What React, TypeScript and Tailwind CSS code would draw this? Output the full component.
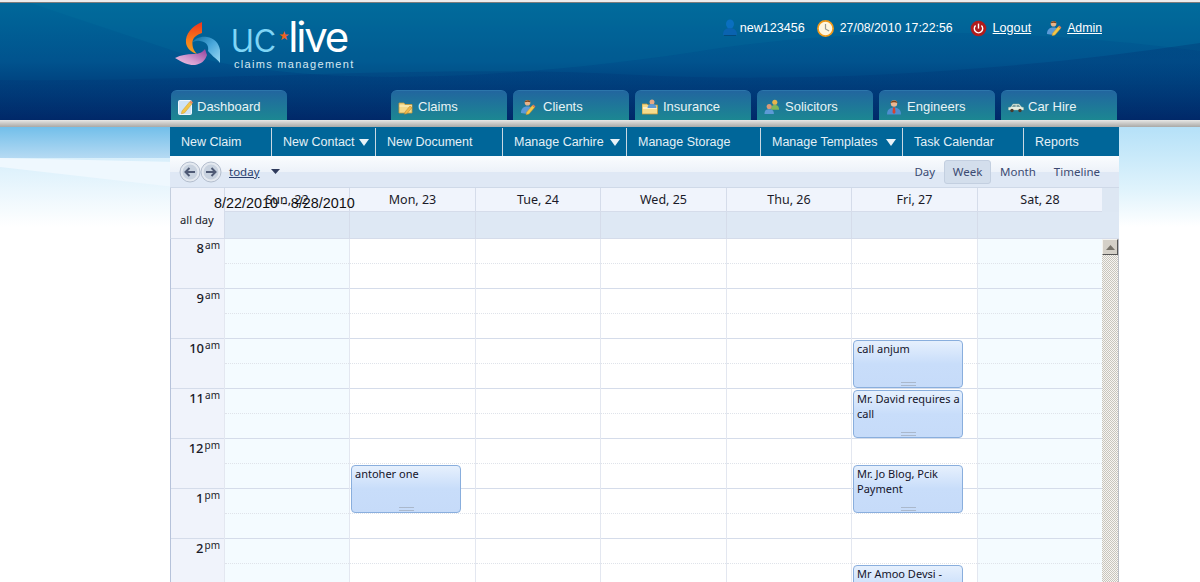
import React from "react";

const cal = "font-['Noto_Sans',sans-serif]";

function IconUser() {
  return (
    <svg width="16" height="18" viewBox="0 0 16 18">
      <ellipse cx="8" cy="5" rx="4" ry="4.6" fill="#0a6fc0" />
      <path d="M1 16c0-5 3-7 7-7s7 2 7 7z" fill="#0a63b0" />
      <rect x="2" y="16" width="12" height="1" fill="#034a7c" />
    </svg>
  );
}
function IconClock() {
  return (
    <svg width="17" height="17" viewBox="0 0 17 17">
      <circle cx="8.5" cy="8.5" r="7.6" fill="#fff6df" stroke="#f09a1a" strokeWidth="1.7" />
      <path d="M8.5 4v5l3.6 2" fill="none" stroke="#9a9a92" strokeWidth="1.2" />
    </svg>
  );
}
function IconPower() {
  return (
    <svg width="17" height="17" viewBox="0 0 17 17">
      <circle cx="8.5" cy="8.5" r="7.8" fill="#b01c1c" />
      <path d="M5.6 5.6a4.2 4.2 0 1 0 5.8 0" fill="none" stroke="#fff" strokeWidth="1.4" />
      <path d="M8.5 3.6v5" stroke="#fff" strokeWidth="1.4" />
    </svg>
  );
}
function IconPersonPencil() {
  return (
    <svg width="16" height="16" viewBox="0 0 17 17">
      <circle cx="8" cy="4" r="3" fill="#e9b48c" />
      <path d="M5 3.4c0-2.600 6-3 6 0-2-.8-4-.8-6 0z" fill="#7c4318" />
      <path d="M1 15c0-5 3-7 7-7s5 1 5 3l-5 5z" fill="#5b9ad8" />
      <path d="M7 14l6-7 2.500 2-6 7-3 .8z" fill="#f3c648" stroke="#c98f22" strokeWidth=".5" />
      <path d="M13 7l1-1.200 2.400 2-1 1.200z" fill="#e2795a" />
    </svg>
  );
}
function IconNote() {
  return (
    <svg width="16" height="16" viewBox="0 0 16 16">
      <rect x=".5" y="1.500" width="13" height="14" rx="1" fill="#cfe4f7" stroke="#eef6fd" />
      <path d="M4 12l7.500-9 2.400 2-7.500 9-3 .8z" fill="#f3c648" stroke="#cf9a2c" strokeWidth=".5" />
      <path d="M11.500 3l1.200-1.400 2.400 2L13.900 5z" fill="#e9885e" />
    </svg>
  );
}
function IconFolderPencil() {
  return (
    <svg width="16" height="16" viewBox="0 0 16 16">
      <path d="M1 4h5l1 1.500h7V14H1z" fill="#f4d98a" stroke="#c79a3a" strokeWidth=".8" />
      <path d="M1.500 7h12.500" stroke="#fff3c8" />
      <path d="M7 13l5-6 2 1.600-5 6-2.500.6z" fill="#f0b84a" stroke="#b9802a" strokeWidth=".5" />
    </svg>
  );
}
function IconFolderPerson() {
  return (
    <svg width="16" height="16" viewBox="0 0 16 16">
      <path d="M0 5h5l1 1h9.500v9H0z" fill="#f6dc8c" stroke="#c79a3a" strokeWidth=".8" />
      <path d="M1 9h14" stroke="#fff6d8" strokeWidth="1.500" />
      <circle cx="10" cy="3" r="2.500" fill="#e5a884" />
      <path d="M5.500 9c0-3 2-4 4.500-4s4.500 1 4.500 4z" fill="#5d9ad6" />
    </svg>
  );
}
function IconPeople() {
  return (
    <svg width="17" height="16" viewBox="0 0 17 16">
      <circle cx="11.500" cy="3" r="2.700" fill="#e8b44c" />
      <path d="M7.500 11c0-4 1.500-5 4-5s4.500 1 4.500 5z" fill="#7fb65a" />
      <circle cx="5.500" cy="7.500" r="2.700" fill="#d89a78" />
      <path d="M.5 15.500c0-4 2-5 5-5s5 1 5 5z" fill="#5d9ad6" />
    </svg>
  );
}
function IconEngineer() {
  return (
    <svg width="16" height="16" viewBox="0 0 16 16">
      <circle cx="8" cy="4.500" r="3.200" fill="#eab894" />
      <path d="M4.500 4c0-3.500 7-3.500 7 0-2-1-5-1-7 0z" fill="#7c4318" />
      <path d="M1 15.500c0-5 3-7 7-7s7 2 7 7z" fill="#4f8ed0" />
      <path d="M7 8.500h2l.5 5-1.500 1.500-1.500-1.500z" fill="#d8402c" />
    </svg>
  );
}
function IconCar() {
  return (
    <svg width="16" height="16" viewBox="0 0 16 16">
      <path d="M.5 11V8.500L3 8l2-3h6l2.500 3 2 .6V11z" fill="#e6efe2" stroke="#aebfa8" strokeWidth=".4" />
      <path d="M5.500 5.800h2.200V8H3.900zM8.500 5.800h2.200L12.300 8H8.500z" fill="#7da0a0" />
      <circle cx="4" cy="11.500" r="1.700" fill="#4a3a2a" />
      <circle cx="12" cy="11.500" r="1.700" fill="#4a3a2a" />
    </svg>
  );
}

function Logo() {
  return (
    <svg width="46" height="44" viewBox="175 22 46 44" className="shrink-0">
      <defs>
        <linearGradient id="lgO" x1="0" y1="0" x2="0" y2="1">
          <stop offset="0" stopColor="#f0331c" />
          <stop offset=".6" stopColor="#f7801a" />
          <stop offset="1" stopColor="#f0a020" />
        </linearGradient>
        <linearGradient id="lgB" x1="0" y1="0" x2="1" y2="1">
          <stop offset="0" stopColor="#0d6ea0" />
          <stop offset=".5" stopColor="#4aa8dc" />
          <stop offset="1" stopColor="#9ad8f2" />
        </linearGradient>
        <linearGradient id="lgP" x1="1" y1="0" x2="0" y2="1">
          <stop offset="0" stopColor="#8f3f9a" />
          <stop offset=".6" stopColor="#d59cd0" />
          <stop offset="1" stopColor="#f0c8e2" />
        </linearGradient>
      </defs>
      <path d="M202 22C192 26 185 34 186 43c.6 5 5 9 11 11-3-3-5-7-4.500-12 .6-5 4-7 9.500-9z" fill="url(#lgO)" />
      <path d="M192 43c3-5 9-7 15-6 7 1 12 6 13 13v13c-3-4-7-6-12-12 1-5-1-9-8-10-3-.5-6 0-8 2z" fill="url(#lgB)" />
      <path d="M175 58c6-3 12-4 18-4 6 0 10-2 12-5l2 6c-2 6-6 9-12 10-6 .5-12-2-20-7z" fill="url(#lgP)" />
    </svg>
  );
}

const tabs = [
  { label: "Claims", icon: <IconFolderPencil />, gap: "gap-[4px]" },
  { label: "Clients", icon: <IconPersonPencil />, gap: "gap-[7px]" },
  { label: "Insurance", icon: <IconFolderPerson />, gap: "gap-[5px]" },
  { label: "Solicitors", icon: <IconPeople />, gap: "gap-[5px]" },
  { label: "Engineers", icon: <IconEngineer />, gap: "gap-[5px]" },
  { label: "Car Hire", icon: <IconCar />, gap: "gap-[4px]" },
];

function Tab({ label, icon, gap }: { label: string; icon: React.ReactNode; gap: string }) {
  return (
    <div className={`flex h-[30px] w-[116px] items-center rounded-t-[6px] border-t border-t-[#2c76ab] bg-gradient-to-b from-[#22669f] to-[#1c8792] pl-[7px] pt-[2px] text-[13px] text-[#e8f3f6] ${gap}`}>
      <span className="flex w-[16px] shrink-0 justify-center">{icon}</span>
      <span>{label}</span>
    </div>
  );
}

const navItems = [
  { label: "New Claim", w: "w-[102px]" },
  { label: "New Contact", w: "w-[104px]", caret: true },
  { label: "New Document", w: "w-[127px]" },
  { label: "Manage Carhire", w: "w-[124px]", caret: true },
  { label: "Manage Storage", w: "w-[134px]" },
  { label: "Manage Templates", w: "w-[142px]", caret: true },
  { label: "Task Calendar", w: "w-[121px]" },
  { label: "Reports", w: "w-[95px]", last: true },
];

const dayCols = [
  { label: "Sun, 22", w: "w-[125px]", weekend: true },
  { label: "Mon, 23", w: "w-[126px]" },
  { label: "Tue, 24", w: "w-[125px]" },
  { label: "Wed, 25", w: "w-[126px]" },
  { label: "Thu, 26", w: "w-[125px]" },
  { label: "Fri, 27", w: "w-[126px]" },
  { label: "Sat, 28", w: "w-[125px]", weekend: true },
];

const hours = [
  ["8", "am"],
  ["9", "am"],
  ["10", "am"],
  ["11", "am"],
  ["12", "pm"],
  ["1", "pm"],
  ["2", "pm"],
];

const events: Record<string, { top: string; text: string }[]> = {
  "Mon, 23": [{ top: "top-[226px]", text: "antoher one" }],
  "Fri, 27": [
    { top: "top-[101px]", text: "call anjum" },
    { top: "top-[151px]", text: "Mr. David requires a call" },
    { top: "top-[226px]", text: "Mr. Jo Blog, Pcik Payment" },
    { top: "top-[326px]", text: "Mr Amoo Devsi - " },
  ],
};

function HourSlots() {
  return (
    <>
      {hours.map((h) => (
        <div key={h[0]} className="h-[50px] border-b border-b-[#d5dcea]">
          <div className="h-[25px] border-b border-dotted border-b-[#dfe3ea]" />
        </div>
      ))}
    </>
  );
}

export default function App() {
  return (
    <div className="relative h-[582px] w-full overflow-hidden bg-white font-['Liberation_Sans',Arial,sans-serif]">
      {/* top strip */}
      <div className="h-[3px] border-b border-b-[#7c7c7c] bg-[#ececec]" />

      {/* header */}
      <header className="relative h-[117px] bg-gradient-to-b from-[#00689a] via-[#01538e] to-[#012868]">
        <svg className="absolute inset-0 h-full w-full" viewBox="0 0 1200 117" preserveAspectRatio="none">
          <defs>
            <linearGradient id="hdrLow" x1="0" y1="0" x2="0" y2="1">
              <stop offset="0" stopColor="#012a6c" stopOpacity=".3" />
              <stop offset="1" stopColor="#012a6c" stopOpacity=".05" />
            </linearGradient>
          </defs>
          <path d="M30 0L180 50C300 85 500 80 720 45 900 20 1060 30 1200 48V0z" fill="#0a86aa" opacity=".14" />
          <path d="M0 77C200 80 420 60 640 72 800 80 1000 70 1200 40V117H0z" fill="url(#hdrLow)" />
        </svg>
        <div className="relative flex h-full flex-col pl-[171px] pr-[83px]">
          <div className="flex h-[87px] items-start justify-between">
            <div className="flex items-start pl-[4px] pt-[19px]">
              <Logo />
              <div className="ml-[11px] flex flex-col">
                <div className="ml-[-2px] mt-[-8px] flex h-[44px] items-center font-['Inter',sans-serif] text-[42px] font-light tracking-[-1.5px]">
                  <span className="text-[#7fd5f6]">uc</span>
                  <span className="ml-[3px] text-[11px] text-[#f0621e]">★</span>
                  <span className="font-normal tracking-[-2.2px] text-white">live</span>
                </div>
                <div className="ml-[2px] text-[11px] leading-[13px] tracking-[1.3px] text-[#d4e8f2]">
                  claims management
                </div>
              </div>
            </div>
            <div className="flex items-center pr-[15px] pt-[16px] text-[12.3px] leading-[18px] text-white">
              <IconUser />
              <span className="ml-[2px] text-[12.6px]">new123456</span>
              <span className="ml-[12px]"><IconClock /></span>
              <span className="ml-[6px]">27/08/2010 17:22:56</span>
              <span className="ml-[17px]"><IconPower /></span>
              <span className="ml-[6px] text-[12.6px] underline">Logout</span>
              <span className="ml-[15px]"><IconPersonPencil /></span>
              <span className="ml-[5px] underline">Admin</span>
            </div>
          </div>
          <div className="flex gap-[6px]">
            <div className="mr-[98px]">
              <Tab label="Dashboard" icon={<IconNote />} gap="gap-[3px]" />
            </div>
            {tabs.map((t) => (
              <Tab key={t.label} label={t.label} icon={t.icon} gap={t.gap} />
            ))}
          </div>
        </div>
      </header>

      {/* grey bar */}
      <div className="h-[7px] bg-gradient-to-b from-[#e8e8e6] to-[#a9a9a7]" />

      {/* page */}
      <div className="relative h-[455px]">
        <svg className="absolute left-0 top-0 h-[100px] w-full" viewBox="0 0 1200 100" preserveAspectRatio="none">
          <defs>
            <linearGradient id="skyTop" x1="0" y1="0" x2="0" y2="1">
              <stop offset="0" stopColor="#72bfea" />
              <stop offset="1" stopColor="#b8dbf3" />
            </linearGradient>
            <linearGradient id="skyLow" x1="0" y1="0" x2="0" y2="1">
              <stop offset="0" stopColor="#d8effb" />
              <stop offset="1" stopColor="#ffffff" />
            </linearGradient>
            <linearGradient id="skyRight" x1="0" y1="0" x2="0" y2="1">
              <stop offset="0" stopColor="#b5e1f8" />
              <stop offset=".62" stopColor="#dff3fc" />
              <stop offset="1" stopColor="#ffffff" />
            </linearGradient>
          </defs>
          <rect width="1200" height="32" fill="url(#skyTop)" />
          <rect y="31" width="1200" height="69" fill="url(#skyLow)" />
          <path d="M0 31L175 35V60L0 40z" fill="#eff8fe" />
          <rect x="1119" width="81" height="100" fill="url(#skyRight)" />
        </svg>

        <main className={`relative ml-[170px] flex h-full w-[950px] flex-col ${cal}`}>
          {/* nav */}
          <nav className="mr-[1px] flex h-[29px] shrink-0 bg-[#006699] pt-[1px] font-['Liberation_Sans',Arial,sans-serif] text-[12.5px] text-[#e4f0f6]">
            {navItems.map((n) => (
              <div
                key={n.label}
                className={`flex items-center justify-between pl-[11px] pr-[6px] ${n.w} ${n.last ? "" : "border-r border-r-[#c9d8e2]"}`}
              >
                <span>{n.label}</span>
                {n.caret && (
                  <svg width="10" height="7" viewBox="0 0 10 7">
                    <path d="M0 0h10L5 7z" fill="#e8f2f8" />
                  </svg>
                )}
              </div>
            ))}
          </nav>

          {/* toolbar */}
          <div className="flex h-[32px] w-[949px] shrink-0 items-center justify-between border-b border-b-[#cfd9e8] bg-[linear-gradient(#fafcfe_0%,#edf2f9_50%,#dfe8f5_52%,#dfe8f5_100%)] pl-[9px] pr-[8px] text-[11.5px] text-[#3b4a72]">
            <div className="flex items-center">
              <svg width="44" height="22" viewBox="0 0 44 22">
                <circle cx="11" cy="11" r="10" fill="#e4e9f0" stroke="#b4bece" />
                <circle cx="32" cy="11" r="10" fill="#e4e9f0" stroke="#b4bece" />
                <circle cx="11" cy="11" r="7.500" fill="#c8d2df" />
                <circle cx="32" cy="11" r="7.500" fill="#c8d2df" />
                <path d="M16 11H7M10.500 7l-4 4 4 4" fill="none" stroke="#4f5a75" strokeWidth="2" />
                <path d="M27 11h9M32.500 7l4 4-4 4" fill="none" stroke="#4f5a75" strokeWidth="2" />
              </svg>
              <span className="ml-[6px] text-[#2a3f6e] underline">today</span>
              <svg className="ml-[11px]" width="9" height="5" viewBox="0 0 9 5">
                <path d="M0 0h9L4.500 5z" fill="#2e3a5c" />
              </svg>
            </div>
            <div className="flex items-center">
              <span className="px-[9px]">Day</span>
              <span className="flex h-[24px] w-[47px] items-center justify-center rounded-[3px] border border-[#c3cfe0] bg-[#d3deec]">Week</span>
              <span className="px-[9px]">Month</span>
              <span className="pl-[9px] pr-[11px]">Timeline</span>
            </div>
          </div>

          {/* day header */}
          <div className="relative flex h-[24px] w-[949px] shrink-0 border-l border-l-[#c4cede] bg-[#dde7f3] text-[12.5px] text-[#1a1a28]">
            <div className="w-[53px] shrink-0 bg-[#f0f3fb]" />
            {dayCols.map((d) => (
              <div
                key={d.label}
                className={`flex items-center justify-center border-b border-l border-b-[#d5dcea] border-l-[#d5dcea] bg-[#f0f4fc] pt-[1px] ${d.w}`}
              >
                {d.label}
              </div>
            ))}
            <div className="absolute left-[43px] top-[6px] whitespace-nowrap font-['Liberation_Sans',Arial,sans-serif] text-[14.4px] leading-[18px] text-[#111]">
              8/22/2010 - 8/28/2010
            </div>
          </div>

          {/* all day */}
          <div className="flex h-[27px] w-[949px] shrink-0 border-b border-l border-b-[#d5dcea] border-l-[#c4cede] bg-[#dee8f4] text-[11.2px] text-[#1a1a28]">
            <div className="w-[53px] shrink-0 bg-[#f0f3fb] pl-[9px] leading-[15px]">all day</div>
            {dayCols.map((d) => (
              <div key={d.label} className={`border-l border-l-[#d5dcea] ${d.w}`} />
            ))}
          </div>

          {/* grid */}
          <div className="flex min-h-0 w-[949px] flex-1 overflow-hidden border-l border-l-[#b6c2da]">
            <div className="w-[53px] shrink-0 bg-[#f0f3fb] text-[#1a1a28]">
              {hours.map((h) => (
                <div key={h[0]} className="flex h-[50px] justify-end border-b border-b-[#d5dcea] pr-[4px] pt-[1px]">
                  <span className="text-[13px] font-medium leading-[16px]">{h[0]}</span>
                  <span className="ml-[1px] text-[10px] leading-[11px]">{h[1]}</span>
                </div>
              ))}
            </div>
            {dayCols.map((d) => (
              <div
                key={d.label}
                className={`relative shrink-0 border-l border-l-[#e3e7f0] ${d.w} ${d.weekend ? "bg-[#f4fbff]" : "bg-white"}`}
              >
                <HourSlots />
                {(events[d.label] || []).map((e) => (
                  <div
                    key={e.text}
                    className={`absolute left-[1px] h-[48px] w-[110px] overflow-hidden rounded-[4px] border border-[#89aedd] bg-gradient-to-b from-[#e6f0fd] via-[#c8ddfa] to-[#c6dbf9] pl-[3px] pr-[1px] text-[11px] leading-[15px] text-[#14142a] ${e.top}`}
                  >
                    {e.text}
                    <div className="absolute bottom-[1px] left-[47px] h-[4px] w-[15px] border-y border-y-[#aab8cc]" />
                  </div>
                ))}
              </div>
            ))}
            {/* scrollbar */}
            <div className="w-[16px] shrink-0 bg-[repeating-conic-gradient(#c8c5bd_0_25%,#f6f5f2_0_50%)] bg-[length:2px_2px]">
              <div className="flex h-[16px] items-center justify-center border border-t-[#f4f3ef] border-l-[#f4f3ef] border-b-[#555] border-r-[#555] bg-[#d4d0c8]">
                <svg width="9" height="5" viewBox="0 0 9 5">
                  <path d="M0 5L4.500 0 9 5z" fill="#77736b" />
                </svg>
              </div>
            </div>
            <div className="w-[1px] shrink-0 bg-[#b8bcc4]" />
          </div>
        </main>
      </div>
    </div>
  );
}
